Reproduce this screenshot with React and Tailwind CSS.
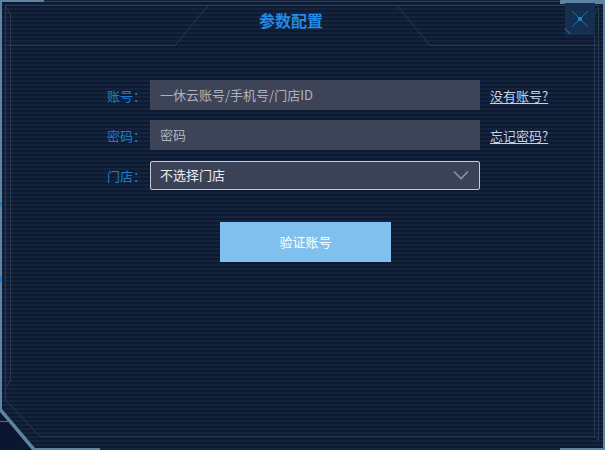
import React from "react";

const font = { fontFamily: '"Noto Sans CJK SC", "Noto Sans", sans-serif' };

function Frame() {
  return (
    <svg
      className="absolute inset-0 pointer-events-none"
      width="605"
      height="450"
      viewBox="0 0 605 450"
    >
      {/* outside corner fill */}
      <polygon points="0,410 34,450 0,450" fill="#0b1630" />
      {/* outer light border */}
      <rect x="0" y="0" width="44" height="2" fill="#5f83a3" />
      <rect x="44" y="1" width="516" height="1" fill="#2a3d58" />
      <rect x="560" y="0" width="45" height="4" fill="#5f83a3" />
      <rect x="0" y="0" width="2" height="410" fill="#5f83a3" />
      <polygon points="0,409 2,409 35,448 35,450 32,450 0,412" fill="#5f83a3" />
      <rect x="32" y="448" width="68" height="2" fill="#5f83a3" />
      <rect x="603" y="0" width="2" height="450" fill="#5f83a3" />
      <rect x="560" y="448" width="45" height="2" fill="#5f83a3" />
      {/* small blue marks on left edge */}
      <rect x="0" y="202" width="2" height="4" fill="#1e7fd0" />
      <rect x="0" y="276" width="2" height="6" fill="#1e7fd0" />
      <rect x="0" y="421" width="10" height="1" fill="#2a7fb8" />

      <g stroke="#2b3b4f" strokeWidth="1" fill="none">
        {/* top line */}
        <path d="M5 5.5 H598.5" />
        {/* left lines */}
        <path d="M5.5 5.5 V400 L40 436.5 H594.5" />
        <path d="M5.5 6 L10.5 14 V380 L5.5 388" />
        {/* right lines */}
        <path d="M598.5 5.5 V440" />
        <path d="M594.5 14 L598 8" />
        <path d="M594.5 14 V436.5 L599 441" />
        {/* title tab */}
        <path d="M5.5 45.5 H175 L208 5.5" />
        <path d="M397 5.5 L430 45.5 H598.5" />
      </g>
    </svg>
  );
}

function Chevron() {
  return (
    <svg width="16" height="10" viewBox="0 0 16 10" fill="none">
      <path d="M1 1.5 L8 8.5 L15 1.5" stroke="#8993a8" strokeWidth="1.6" />
    </svg>
  );
}

function CloseButton() {
  return (
    <div className="absolute top-[3px] left-[565px] w-[30px] h-[32px] bg-[#15304f] flex items-center justify-center">
      <svg width="18" height="18" viewBox="0 0 18 18" fill="none">
        <path d="M1 1 L17 17 M17 1 L1 17" stroke="#1b6db4" strokeWidth="1" />
        <rect x="7" y="7" width="4" height="4" fill="#1f7fcf" />
      </svg>
      <div className="absolute left-[0px] bottom-[0px] w-[8px] h-px bg-[#1b6db4] rotate-45 origin-left translate-y-[-6px]" />
    </div>
  );
}

function Row({ label, children, link }) {
  return (
    <div className="flex items-center h-[30px]">
      <div className="w-[43px] text-[13px] text-[#1b7dd3] leading-none">{label}</div>
      {children}
      {link && (
        <a className="ml-[10px] text-[13px] text-[#c3d1e2] underline underline-offset-2 leading-none">
          {link}
        </a>
      )}
    </div>
  );
}

export default function App() {
  return (
    <div
      className="relative w-[605px] h-[450px] overflow-hidden bg-[repeating-linear-gradient(to_bottom,#14243f_0px,#14243f_2px,#0e1a2f_2px,#0e1a2f_4px)]"
      style={font}
    >
      <Frame />
      <CloseButton />

      {/* Header */}
      <div className="relative h-[40px] flex items-center justify-center">
        <h1 className="text-[16px] font-bold text-[#238be9] ml-[-23px]">参数配置</h1>
      </div>

      {/* Form */}
      <div className="relative flex flex-col gap-[10px] pt-[40px] pl-[107px]">
        <Row label="账号：" link="没有账号?">
          <div className="w-[330px] h-[30px] bg-[#3e4458] flex items-center pl-[10px] text-[13px] text-[#aeb2bd]">
            一休云账号/手机号/门店ID
          </div>
        </Row>
        <Row label="密码：" link="忘记密码?">
          <div className="w-[330px] h-[30px] bg-[#3e4458] flex items-center pl-[10px] text-[13px] text-[#aeb2bd]">
            密码
          </div>
        </Row>
        <Row label="门店：">
          <div className="w-[330px] h-[29px] bg-[#3b4256] border border-[#c4cad4] rounded-[2px] flex items-center justify-between pl-[9px] pr-[10px] text-[13px] text-[#eceef2]">
            <span>不选择门店</span>
            <Chevron />
          </div>
        </Row>
      </div>

      <div className="relative pt-[32px] pl-[220px]">
        <button className="w-[171px] h-[40px] bg-[#7fc0ee] text-white text-[13px] flex items-center justify-center">
          验证账号
        </button>
      </div>
    </div>
  );
}
